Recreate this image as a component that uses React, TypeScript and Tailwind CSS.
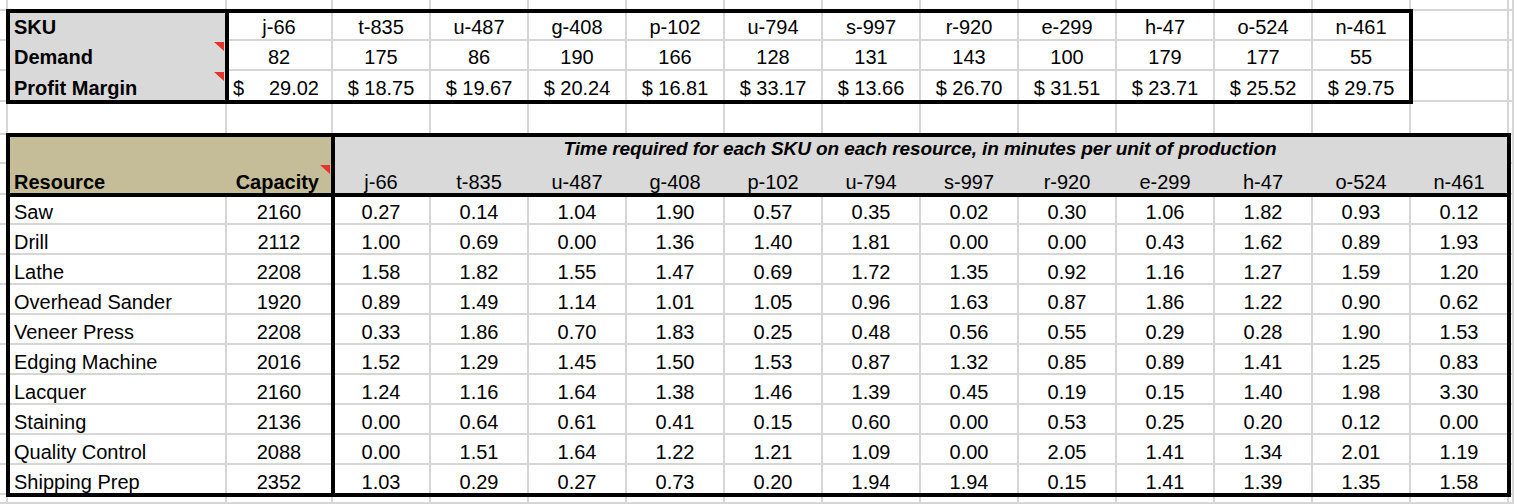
import React from "react";
import clsx from "clsx";

const skus = ["j-66", "t-835", "u-487", "g-408", "p-102", "u-794", "s-997", "r-920", "e-299", "h-47", "o-524", "n-461"];
const demand = [82, 175, 86, 190, 166, 128, 131, 143, 100, 179, 177, 55];
const margin = ["29.02", "18.75", "19.67", "20.24", "16.81", "33.17", "13.66", "26.70", "31.51", "23.71", "25.52", "29.75"];

const resources: [string, number, string[]][] = [
  ["Saw", 2160, ["0.27", "0.14", "1.04", "1.90", "0.57", "0.35", "0.02", "0.30", "1.06", "1.82", "0.93", "0.12"]],
  ["Drill", 2112, ["1.00", "0.69", "0.00", "1.36", "1.40", "1.81", "0.00", "0.00", "0.43", "1.62", "0.89", "1.93"]],
  ["Lathe", 2208, ["1.58", "1.82", "1.55", "1.47", "0.69", "1.72", "1.35", "0.92", "1.16", "1.27", "1.59", "1.20"]],
  ["Overhead Sander", 1920, ["0.89", "1.49", "1.14", "1.01", "1.05", "0.96", "1.63", "0.87", "1.86", "1.22", "0.90", "0.62"]],
  ["Veneer Press", 2208, ["0.33", "1.86", "0.70", "1.83", "0.25", "0.48", "0.56", "0.55", "0.29", "0.28", "1.90", "1.53"]],
  ["Edging Machine", 2016, ["1.52", "1.29", "1.45", "1.50", "1.53", "0.87", "1.32", "0.85", "0.89", "1.41", "1.25", "0.83"]],
  ["Lacquer", 2160, ["1.24", "1.16", "1.64", "1.38", "1.46", "1.39", "0.45", "0.19", "0.15", "1.40", "1.98", "3.30"]],
  ["Staining", 2136, ["0.00", "0.64", "0.61", "0.41", "0.15", "0.60", "0.00", "0.53", "0.25", "0.20", "0.12", "0.00"]],
  ["Quality Control", 2088, ["0.00", "1.51", "1.64", "1.22", "1.21", "1.09", "0.00", "2.05", "1.41", "1.34", "2.01", "1.19"]],
  ["Shipping Prep", 2352, ["1.03", "0.29", "0.27", "0.73", "0.20", "1.94", "1.94", "0.15", "1.41", "1.39", "1.35", "1.58"]],
];

// sheet columns A..P and rows 1..18, sized like the Excel view
const GRID =
  "grid grid-cols-[8px_219px_106px_repeat(12,98px)_5px] grid-rows-[11px_30px_30px_31px_33px_29px_31px_repeat(10,30px)_9px]";

const WHITE = "bg-white border-[#d6d6d6]";
const GRAY = "bg-[#d9d9d9] border-[#d9d9d9]";
const TAN = "bg-[#c4bd97] border-[#c4bd97]";

// red comment marker in the top-right corner of a cell
const Note = () => (
  <svg className="absolute right-[1px] top-[1px]" width="10" height="9" viewBox="0 0 10 9">
    <polygon points="0,0 10,0 10,9" fill="#e3352b" />
  </svg>
);

type Spec = {
  fill?: string;
  align?: string;
  weight?: string;
  note?: boolean;
  span?: boolean;
  content?: React.ReactNode;
};

function specFor(r: number, c: number): Spec {
  // top table: SKU / Demand / Profit Margin
  if (r >= 2 && r <= 4) {
    if (c === 2) {
      return {
        fill: GRAY,
        align: "justify-start pl-[6px]",
        weight: "font-bold",
        note: r > 2,
        content: ["SKU", "Demand", "Profit Margin"][r - 2],
      };
    }
    if (c >= 3 && c <= 14) {
      const i = c - 3;
      if (r === 2) return { align: "justify-center", content: skus[i] };
      if (r === 3) return { align: "justify-center", content: demand[i] };
      if (i === 0) {
        return {
          align: "justify-between pl-[6px] pr-[12px]",
          content: (
            <>
              <span>$</span>
              <span>{margin[i]}</span>
            </>
          ),
        };
      }
      return { align: "justify-center", content: `$ ${margin[i]}` };
    }
  }

  // resource table header
  if (r === 6) {
    if (c === 2 || c === 3) return { fill: TAN };
    if (c === 4) {
      return {
        fill: GRAY,
        span: true,
        align: "justify-center",
        weight: "font-bold italic text-[19px] tracking-[-0.1px]",
        content: "Time required for each SKU on each resource, in minutes per unit of production",
      };
    }
  }
  if (r === 7) {
    if (c === 2) return { fill: TAN, align: "justify-start pl-[6px]", weight: "font-bold", content: "Resource" };
    if (c === 3) return { fill: TAN, align: "justify-end pr-[12px]", weight: "font-bold", note: true, content: "Capacity" };
    if (c >= 4 && c <= 15) return { fill: GRAY, align: "justify-center", content: skus[c - 4] };
  }

  // resource rows
  if (r >= 8 && r <= 17) {
    const [name, cap, vals] = resources[r - 8];
    if (c === 2) return { align: "justify-start pl-[6px]", content: name };
    if (c === 3) return { align: "justify-center", content: cap };
    if (c >= 4 && c <= 15) return { align: "justify-center", content: vals[c - 4] };
  }

  return {};
}

function rowPad(r: number) {
  if (r >= 2 && r <= 4) return "items-end pb-[2px]";
  if (r === 6) return "items-end pb-[3px]";
  return "items-end pb-[1px]";
}

const SheetCells = () => {
  const out: React.ReactNode[] = [];
  for (let r = 1; r <= 18; r++) {
    for (let c = 1; c <= 16; c++) {
      if (r === 6 && c > 4 && c <= 15) continue; // covered by the merged title cell
      const s = specFor(r, c);
      out.push(
        <div
          key={`${r}-${c}`}
          className={clsx(
            "flex min-w-0 whitespace-nowrap border-r-2 border-b-2",
            s.fill ?? WHITE,
            s.align,
            s.weight,
            s.span && "col-span-12",
            s.note && "relative",
            rowPad(r)
          )}
        >
          {s.content}
          {s.note && <Note />}
        </div>
      );
    }
  }
  return <>{out}</>;
};

export default function App() {
  return (
    <div className="grid h-[504px] w-[1514px] overflow-hidden bg-white font-['Liberation_Sans',Arial,sans-serif] text-[20px] leading-[20px] text-black">
      <div className={clsx(GRID, "col-start-1 row-start-1")}>
        <SheetCells />
      </div>

      {/* thick table borders */}
      <div className={clsx(GRID, "pointer-events-none relative z-10 col-start-1 row-start-1")}>
        <div className="col-start-2 col-end-15 row-start-2 row-end-5 outline-4 outline-solid outline-black -outline-offset-2" />
        <div className="col-start-2 col-end-3 row-start-2 row-end-5 outline-4 outline-solid outline-black -outline-offset-2" />
        <div className="col-start-2 col-end-16 row-start-6 row-end-18 outline-4 outline-solid outline-black -outline-offset-2" />
        <div className="col-start-2 col-end-16 row-start-6 row-end-8 outline-4 outline-solid outline-black -outline-offset-2" />
        <div className="col-start-2 col-end-4 row-start-6 row-end-18 outline-4 outline-solid outline-black -outline-offset-2" />
      </div>
    </div>
  );
}
